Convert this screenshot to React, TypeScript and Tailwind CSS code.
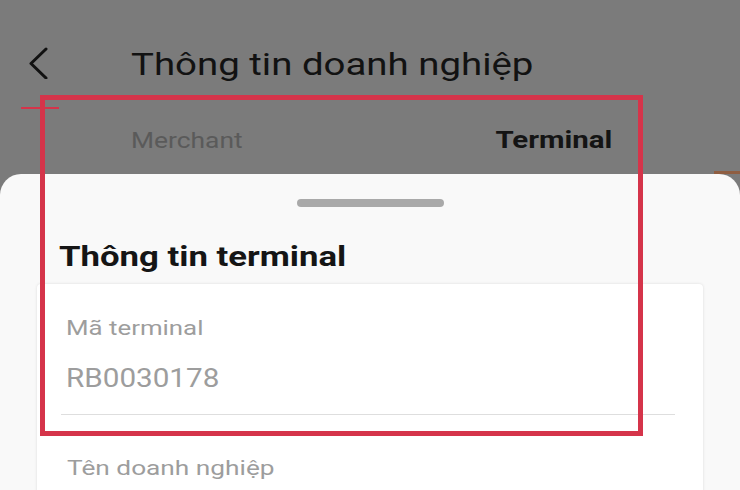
export default function App() {
  return (
    <div className="relative h-[490px] w-[740px] overflow-hidden bg-[#7b7b7b] font-['Roboto',sans-serif]">
      {/* header */}
      <div className="flex h-[48px] items-center mt-[40px]">
        <svg className="ml-[28px] -mt-[3px]" width="20" height="32" viewBox="0 0 20 32" fill="none">
          <polyline points="18,2 3,16.5 18,31" stroke="#111" strokeWidth="3" strokeLinecap="round" strokeLinejoin="round" />
        </svg>
        <h1 className="ml-[83px] origin-left scale-x-[1.2] text-[32px] leading-[48px] text-[#121212]">Thông tin doanh nghiệp</h1>
      </div>

      {/* tabs */}
      <div className="mt-[38px] flex h-[30px] items-center text-[22px] leading-[30px]">
        <span className="ml-[131px] origin-left scale-x-[1.2] text-[#5a5a5a]">Merchant</span>
        <span className="ml-auto mr-[128px] origin-right scale-x-[1.28] text-[23px] font-bold text-[#141414]">Terminal</span>
      </div>
      <div className="mt-[15px] flex h-[3px]">
        <div className="ml-auto h-[3px] w-[26px] bg-[#8f5e42]" />
      </div>

      {/* sheet */}
      <div className="h-[400px] rounded-t-[21px] bg-[#f9f9f9] px-[37px]">
        <div className="flex justify-center pt-[25px]">
          <div className="h-[8px] w-[147px] rounded-full bg-[#a9a9a9]" />
        </div>
        <h2 className="ml-[22px] mt-[33px] origin-left scale-x-[1.24] text-[28px] font-bold leading-[34px] text-[#151515]">Thông tin terminal</h2>
        <div className="mt-[10px] h-[260px] rounded-[4px] bg-white shadow-[0_0_3px_rgba(0,0,0,0.12)]">
          <div className="pt-[30px] pl-[24px] pr-[28px]">
            <div className="ml-[5px] origin-left scale-x-[1.23] text-[21px] leading-[28px] text-[#9d9d9d]">Mã terminal</div>
            <div className="ml-[5px] mt-[20px] origin-left scale-x-[1.14] text-[26px] leading-[33px] text-[#9d9d9d]">RB0030178</div>
            <div className="mt-[19px] h-px bg-[#dedede]" />
            <div className="ml-[6px] mt-[39px] origin-left scale-x-[1.25] text-[21px] leading-[28px] text-[#9d9d9d]">Tên doanh nghiệp</div>
          </div>
        </div>
      </div>

      {/* annotation overlay */}
      <div className="absolute left-[40px] top-[95px] h-[341px] w-[603px] border-[5px] border-[#d5344a]" />
      <div className="absolute left-[21px] top-[107px] h-[2px] w-[38px] bg-[#d5344a]" />
    </div>
  );
}
